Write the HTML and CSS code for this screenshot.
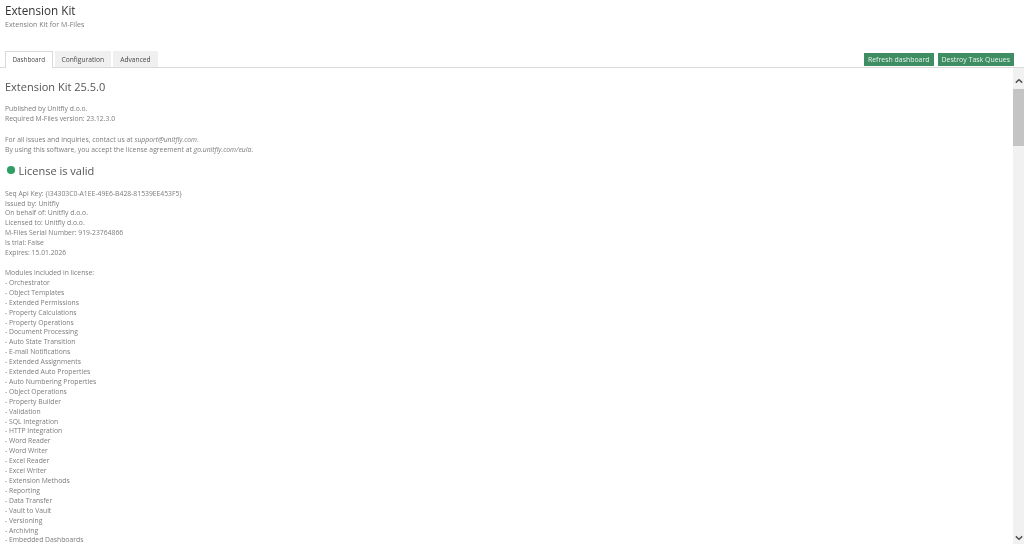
FILE: index.html
```html
<!DOCTYPE html>
<html lang="en">
<head>
<meta charset="utf-8">
<title>Extension Kit</title>
<link rel="stylesheet" href="styles.css">
</head>
<body>
<header class="head">
  <h1 class="title">Extension Kit</h1>
  <p class="subtitle">Extension Kit for M-Files</p>
</header>
<nav class="tabbar">
  <div class="tabs">
    <div class="tab active">Dashboard</div>
    <div class="tab">Configuration</div>
    <div class="tab">Advanced</div>
  </div>
  <div class="actions">
    <button class="btn">Refresh dashboard</button>
    <button class="btn">Destroy Task Queues</button>
  </div>
</nav>
<div class="body">
  <main class="content">
    <h2 class="version">Extension Kit 25.5.0</h2>
    <p class="para">Published by Unitfly d.o.o.<br>Required M-Files version: 23.12.3.0</p>
    <p class="para">For all issues and inquiries, contact us at <em>support@unitfly.com</em>.<br>By using this software, you accept the license agreement at <em>go.unitfly.com/eula</em>.</p>
    <h2 class="status"><span class="dot"></span>License is valid</h2>
    <p class="para">Seq Api Key: {I34303C0-A1EE-49E6-B428-81539EE453F5}<br>Issued by: Unitfly<br>On behalf of: Unitfly d.o.o.<br>Licensed to: Unitfly d.o.o.<br>M-Files Serial Number: 919-23764866<br>Is trial: False<br>Expires: 15.01.2026</p>
    <p class="para modules">Modules included in license:<br>- Orchestrator<br>- Object Templates<br>- Extended Permissions<br>- Property Calculations<br>- Property Operations<br>- Document Processing<br>- Auto State Transition<br>- E-mail Notifications<br>- Extended Assignments<br>- Extended Auto Properties<br>- Auto Numbering Properties<br>- Object Operations<br>- Property Builder<br>- Validation<br>- SQL Integration<br>- HTTP Integration<br>- Word Reader<br>- Word Writer<br>- Excel Reader<br>- Excel Writer<br>- Extension Methods<br>- Reporting<br>- Data Transfer<br>- Vault to Vault<br>- Versioning<br>- Archiving<br>- Embedded Dashboards</p>
  </main>
  <div class="scrollbar">
    <svg class="arrow arrow-up" viewBox="0 0 10 6"><path d="M1 5 L5 1.5 L9 5" fill="none" stroke="#505050" stroke-width="1.8"/></svg>
    <div class="thumb"></div>
    <div class="track"></div>
    <svg class="arrow arrow-down" viewBox="0 0 10 6"><path d="M1 1 L5 4.5 L9 1" fill="none" stroke="#505050" stroke-width="1.8"/></svg>
  </div>
</div>
</body>
</html>
```
FILE: styles.css
```css
* { box-sizing: border-box; }
html, body { margin: 0; height: 100%; background: #fff; }
body {
  display: flex;
  flex-direction: column;
  height: 544px;
  overflow: hidden;
  font-family: "Open Sans", "Noto Sans", sans-serif;
  font-size: 6.8px;
  line-height: 9.9px;
  color: #7c7c7c;
  filter: blur(0.3px);
}
.head { padding: 2px 5px 0; height: 51px; flex: none; }
.title { margin: 0; font-size: 11.7px; line-height: 17px; font-weight: 400; color: #333; }
.subtitle { margin: 0; font-size: 7.1px; line-height: 10px; color: #7c7c7c; }
.tabbar {
  flex: none;
  height: 17px;
  display: flex;
  justify-content: space-between;
  align-items: flex-start;
  padding: 0 10px 0 5px;
  border-bottom: 1px solid #d9d9d9;
}
.tabs { display: flex; gap: 2px; height: 17px; }
.tab {
  padding: 0 7px;
  height: 16px;
  background: #f0f0f0;
  color: #4a4a4a;
  font-size: 6.7px;
  line-height: 17px;
}
.tab.active {
  height: 17px;
  padding: 0 6.5px;
  background: #fff;
  border: 1px solid #d9d9d9;
  border-bottom: 0;
  font-size: 6.3px;
  line-height: 16px;
}
.actions { display: flex; gap: 4px; margin-top: 2px; }
.btn {
  height: 13px;
  padding: 0 4px;
  border: 0;
  background: #3e8d63;
  color: #e8f3ed;
  font: 400 6.95px/13px "Open Sans", "Noto Sans", sans-serif;
}
.body { flex: 1; min-height: 0; display: flex; }
.content { flex: 1; min-width: 0; padding: 11px 5px 0; overflow: hidden; }
.version { margin: 0 0 10px; font-size: 11px; line-height: 15px; font-weight: 400; color: #555; }
.para { margin: 0 0 8px; }
.para + .para { margin-top: 11px; }
.para + .modules { margin-top: 10px; }
.status { margin: 0 0 11px; font-size: 11px; line-height: 15px; font-weight: 400; color: #555; display: flex; align-items: center; gap: 4px; }
.dot { width: 7.5px; height: 7.5px; margin-left: 2px; border-radius: 50%; background: #2f9e63; }
.scrollbar { flex: none; width: 11px; display: flex; flex-direction: column; background: #f1f1f1; }
.arrow { flex: none; width: 8px; height: 6px; margin: 0 auto; }
.arrow-up { margin-top: 10px; margin-bottom: 5px; }
.arrow-down { margin-bottom: 3px; }
.thumb { flex: none; height: 57px; background: #c4c4c4; }
.track { flex: 1; }
```
